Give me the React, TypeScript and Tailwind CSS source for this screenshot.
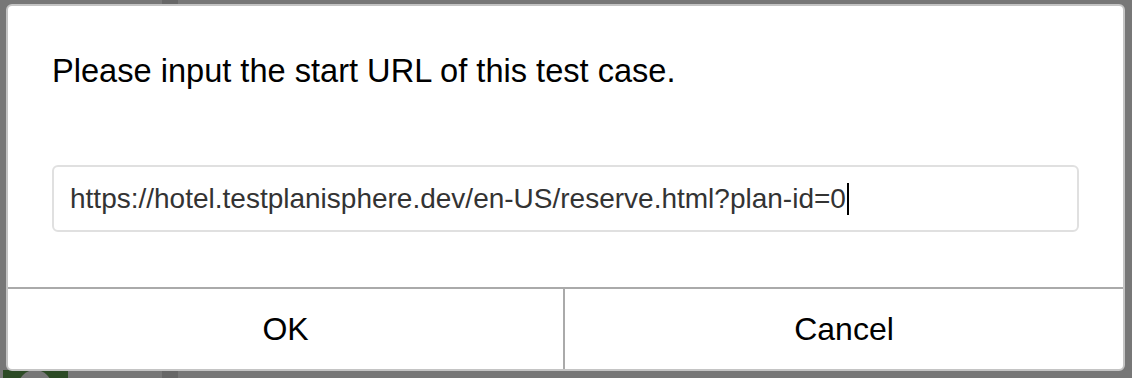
import React from 'react';

const START_URL = 'https://hotel.testplanisphere.dev/en-US/reserve.html?plan-id=0';

const App: React.FC = () => {
  return (
    <div className="relative h-[378px] w-[1132px] overflow-hidden bg-[#777777] font-['Liberation_Sans',Arial,sans-serif]">
      {/* page content peeking out behind the overlay */}
      <div className="absolute left-[162px] top-0 h-full w-[16px] bg-[#666666]" />
      <div className="absolute bottom-0 left-[3px] h-[8px] w-[65px] bg-[#2c4a25]" />
      <div className="absolute bottom-[-26px] left-[18px] h-[34px] w-[34px] rounded-full bg-[#777777]" />

      <div className="relative flex h-full items-start pl-[6px] pt-[4px]">
        <div className="flex h-[367px] w-[1119px] flex-col rounded-[6px] border-2 border-[#c4c4c4] bg-white">
          <div className="flex flex-1 flex-col px-[44px] pt-[47px]">
            <p className="text-[32.6px] leading-[36px] text-black">Please input the start URL of this test case.</p>
            {/* focused text field, caret after the last character */}
            <div
              role="textbox"
              className="mt-[76px] flex h-[67px] w-full items-center rounded-[6px] border-2 border-[#e0e0e0] px-[16px] text-[28px] text-[#333333]"
            >
              <span className="whitespace-nowrap">{START_URL}</span>
              <span className="ml-[1px] h-[32px] w-[2px] bg-black" />
            </div>
          </div>
          <div className="flex h-[82px] border-t-2 border-[#aaaaaa]">
            <button type="button" className="w-[555px] text-[32px] text-black">
              OK
            </button>
            <div className="w-[2px] bg-[#aaaaaa]" />
            <button type="button" className="flex-1 text-[32px] text-black">
              Cancel
            </button>
          </div>
        </div>
      </div>
    </div>
  );
};

export default App;
